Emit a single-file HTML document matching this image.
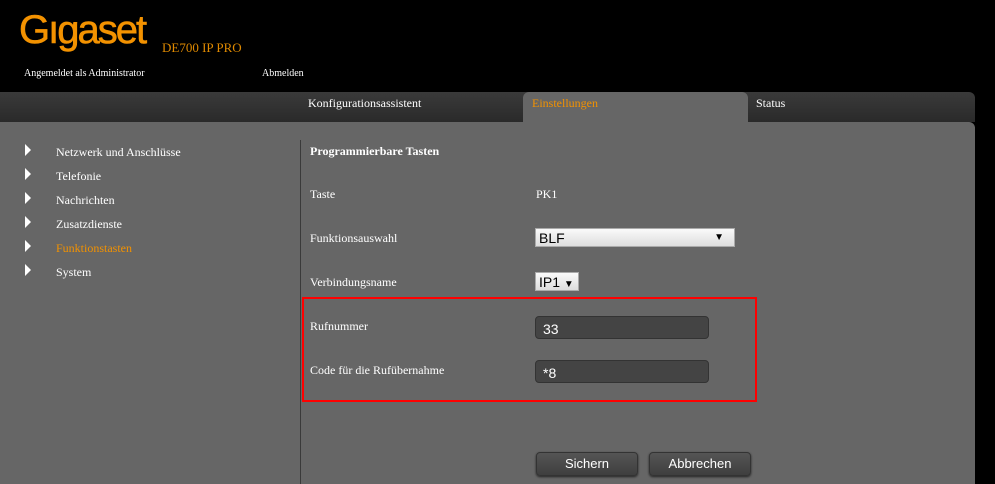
<!DOCTYPE html>
<html><head><meta charset="utf-8"><style>
body{margin:0;width:995px;height:484px;background:#000;overflow:hidden;position:relative;font-family:"Liberation Serif",serif;font-size:12px;color:#fff}
.a{position:absolute;white-space:nowrap}
.logo{left:19px;top:8px;font-family:"Liberation Sans",sans-serif;font-size:40px;color:#f39200;letter-spacing:-2px;-webkit-text-stroke:0.6px #f39200}
.bar{left:0;top:92px;width:975px;height:30px;background:linear-gradient(#3a3a3a,#2a2a2a);border-radius:0 6px 0 0}
.tab{left:523px;top:92px;width:225px;height:32px;background:#666;border-radius:6px 6px 0 0}
.panel{left:0;top:122px;width:975px;height:362px;background:#666;border-radius:0 6px 0 0}
.tri{width:0;height:0;border-left:6px solid #fff;border-top:6px solid transparent;border-bottom:6px solid transparent}
.inp{background:#444;border:1px solid #333;border-radius:4px;width:174px;height:23px;font-family:"Liberation Sans",sans-serif;font-size:14px;line-height:25px;text-indent:7px;box-sizing:border-box}
.sel{background:linear-gradient(#fafafa,#ddd);border:1px solid #aaa;color:#000;font-family:"Liberation Sans",sans-serif;font-size:14px;height:19px;line-height:18px;box-sizing:border-box;padding-left:3px}
.btn{background:linear-gradient(#555,#3f3f3f);border:1px solid #333;border-radius:4px;height:22px;font-family:"Liberation Sans",sans-serif;font-size:13px;line-height:22px;text-align:center;box-shadow:0 1px 2px #222}
</style></head><body>
<div class="a logo">Gıgaset</div>
<div class="a" style="left:162px;top:40px;color:#e08a00;font-size:13px">DE700 IP PRO</div>
<div class="a" style="left:24px;top:68px;font-size:10px">Angemeldet als Administrator</div>
<div class="a" style="left:262px;top:68px;font-size:10px">Abmelden</div>
<div class="a bar"></div>
<div class="a panel"></div>
<div class="a tab"></div>
<div class="a" style="left:308px;top:96px">Konfigurationsassistent</div>
<div class="a" style="left:532px;top:96px;color:#f39200">Einstellungen</div>
<div class="a" style="left:756px;top:96px">Status</div>
<div class="a tri" style="left:25px;top:144px"></div><div class="a" style="left:56px;top:145px">Netzwerk und Anschlüsse</div>
<div class="a tri" style="left:25px;top:168px"></div><div class="a" style="left:56px;top:169px">Telefonie</div>
<div class="a tri" style="left:25px;top:192px"></div><div class="a" style="left:56px;top:193px">Nachrichten</div>
<div class="a tri" style="left:25px;top:216px"></div><div class="a" style="left:56px;top:217px">Zusatzdienste</div>
<div class="a tri" style="left:25px;top:240px"></div><div class="a" style="left:56px;top:241px;color:#f39200">Funktionstasten</div>
<div class="a tri" style="left:25px;top:264px"></div><div class="a" style="left:56px;top:265px">System</div>
<div class="a" style="left:300px;top:140px;width:1px;height:344px;background:#3a3a3a"></div>
<div class="a" style="left:310px;top:144px;font-weight:bold">Programmierbare Tasten</div>
<div class="a" style="left:310px;top:187px">Taste</div>
<div class="a" style="left:536px;top:187px">PK1</div>
<div class="a" style="left:310px;top:231px">Funktionsauswahl</div>
<div class="a sel" style="left:535px;top:228px;width:200px">BLF<span style="position:absolute;right:10px;top:0;font-size:10px">▼</span></div>
<div class="a" style="left:310px;top:275px">Verbindungsname</div>
<div class="a sel" style="left:535px;top:272px;width:44px">IP1 <span style="font-size:10px">▼</span></div>
<div class="a" style="left:302px;top:297px;width:451px;height:101px;border:2px solid #f00"></div>
<div class="a" style="left:310px;top:319px">Rufnummer</div>
<div class="a inp" style="left:535px;top:316px">33</div>
<div class="a" style="left:310px;top:363px">Code für die Rufübernahme</div>
<div class="a inp" style="left:535px;top:360px">*8</div>
<div class="a btn" style="left:536px;top:452px;width:100px">Sichern</div>
<div class="a btn" style="left:649px;top:452px;width:100px">Abbrechen</div>
</body></html>
